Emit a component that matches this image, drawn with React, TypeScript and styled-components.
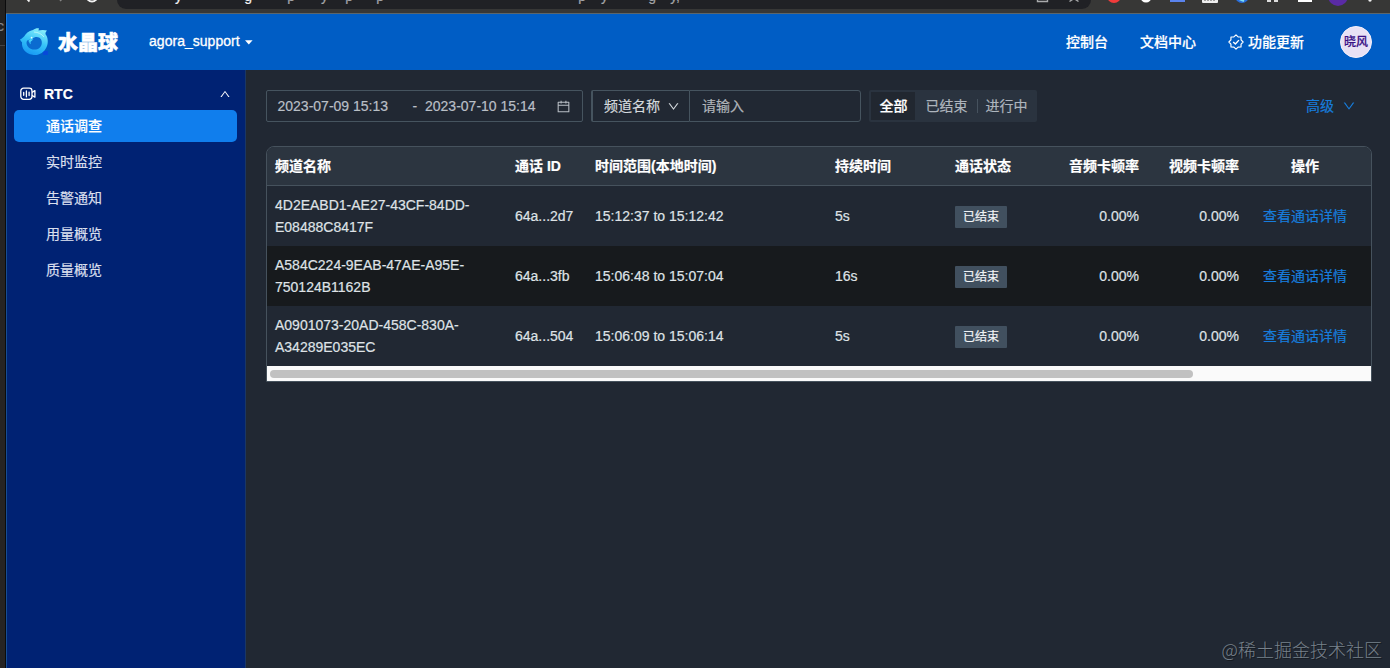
import React from "react";
import styled, { createGlobalStyle } from "styled-components";
import { AiOutlineCalendar, AiOutlineDown, AiOutlineUp } from "react-icons/ai";

const Global = createGlobalStyle`
  * { box-sizing: border-box; }
  body {
    margin: 0;
    width: 1390px;
    height: 668px;
    overflow: hidden;
    background: #262524;
    color: #e3e6ea;
    font: 14px/22px "Liberation Sans", "Noto Sans CJK SC", sans-serif;
    -webkit-text-stroke: 0.2px currentColor;
  }
`;

const Desktop = styled.div`
  display: flex;
  width: 1390px;
  height: 668px;
  overflow: hidden;
`;

const BackWindow = styled.div`
  width: 5px;
  flex: none;
  background: #262423;
  overflow: hidden;
`;

const BackTop = styled.div`
  height: 46px;
  padding-top: 15px;
  border-bottom: 1px solid #454443;
  background: #232221;
  color: #85878a;
  font-size: 14px;
  text-indent: -3px;
`;

const Window = styled.div`
  flex: 1;
  min-width: 0;
  display: flex;
  flex-direction: column;
  border-left: 1px solid #0b0b0c;
`;

const Chrome = styled.div`
  height: 14px;
  flex: none;
  display: flex;
  align-items: flex-start;
  overflow: hidden;
  background: #373736;
  border-bottom: 1px solid #5b666c;
`;

const NavIcons = styled.svg`
  width: 111px;
  height: 8px;
  flex: none;
`;

const AddressBar = styled.div`
  width: 974px;
  height: 9px;
  flex: none;
  display: flex;
  justify-content: space-between;
  overflow: hidden;
  border-radius: 0 0 13px 13px;
  background: #202125;
`;

const Url = styled.div`
  display: flex;
  padding-left: 25px;
  color: #b7b9bc;
  line-height: 16px;
  margin-top: -12px;
  height: 16px;
`;

const UrlPart = styled.span<{ $w: number; $bright?: boolean }>`
  width: ${(p) => p.$w}px;
  flex: none;
  text-align: right;
  white-space: nowrap;
  color: ${(p) => (p.$bright ? "#f1f1f2" : "#a3a5a8")};
`;

const BarIcons = styled.svg`
  width: 62px;
  height: 8px;
`;

const Extensions = styled.svg`
  flex: 1;
  height: 8px;
`;

const Header = styled.header`
  height: 56px;
  flex: none;
  display: flex;
  align-items: center;
  padding: 0 18px 0 13px;
  background: #005dc5;
  border-left: 1px solid #1c7be0;
  color: #fff;
`;

const Brand = styled.div`
  margin-left: 9px;
  width: 62px;
  font: 900 20px/28px "Noto Sans CJK SC", sans-serif;
  -webkit-text-stroke: 0.5px #fff;
`;

const Account = styled.div`
  display: flex;
  align-items: center;
  gap: 5px;
  margin-left: 29px;
  margin-right: auto;
  padding-bottom: 2px;
  letter-spacing: 0.03px;
  -webkit-text-stroke: 0.3px #fff;

  svg { margin-top: 3px; }
`;

const TopLink = styled.div`
  display: flex;
  align-items: center;
  gap: 4px;
  margin-left: 32px;
  font-weight: 500;
`;

const Avatar = styled.div`
  width: 32px;
  height: 32px;
  margin-left: 36px;
  border-radius: 50%;
  background: #e8e1f5;
  border: 1px solid #f5f1fb;
  color: #391085;
  text-align: center;
  font-size: 12px;
  line-height: 30px;
  font-weight: 500;
`;

const Body = styled.div`
  flex: 1;
  display: flex;
  min-height: 0;
`;

const Sidebar = styled.nav`
  width: 240px;
  flex: none;
  padding: 8px 8px 0 7px;
  background: #002273;
  border-left: 1px solid #174d94;
  border-right: 1px solid #1b3764;
`;

const Group = styled.div`
  height: 32px;
  display: flex;
  align-items: center;
  padding: 0 6px;
  color: #fff;
  font-weight: 700;

  svg:last-child { margin-left: auto; }
`;

const GroupName = styled.span`
  margin-left: 8px;
`;

const MenuItem = styled.div<{ $active?: boolean }>`
  height: 32px;
  margin-bottom: 4px;
  padding-left: 32px;
  border-radius: 5px;
  line-height: 32px;
  font-weight: ${(p) => (p.$active ? 500 : 400)};
  color: ${(p) => (p.$active ? "#fff" : "#d9dfed")};
  background: ${(p) => (p.$active ? "#107eed" : "transparent")};
`;

const Main = styled.main`
  flex: 1;
  min-width: 0;
  padding: 20px 18px 0 20px;
  background: #212833;
`;

const Toolbar = styled.div`
  display: flex;
  height: 32px;
  align-items: stretch;
`;

const DateRange = styled.div`
  display: flex;
  align-items: center;
  width: 317px;
  padding: 0 10.5px;
  border: 1px solid #46545f;
  border-radius: 2px;
  color: #b9bfc6;
`;

const DateValue = styled.span<{ $w: number }>`
  width: ${(p) => p.$w}px;
  white-space: nowrap;
`;

const Filter = styled.div`
  display: flex;
  width: 270px;
  margin-left: 8px;
`;

const Select = styled.div`
  width: 98px;
  display: flex;
  align-items: center;
  gap: 7px;
  padding-left: 11px;
  border: 1px solid #46545f;
  border-left-width: 2px;
  border-right: 0;
  border-radius: 2px 0 0 2px;
  color: #d5dade;
`;

const SearchInput = styled.div`
  flex: 1;
  padding-left: 12px;
  line-height: 30px;
  border: 1px solid #46545f;
  border-radius: 0 3px 3px 0;
  color: #b0b5ba;
`;

const Segments = styled.div`
  display: flex;
  width: 168px;
  margin-left: 8px;
  padding: 2px;
  border-radius: 2px;
  background: #2a333f;
`;

const Segment = styled.div<{ $on?: boolean; $line?: boolean }>`
  position: relative;
  width: ${(p) => (p.$on ? 44 : 60)}px;
  flex: none;
  padding-left: ${(p) => (p.$on ? 1 : 3)}px;
  text-align: center;
  line-height: 28px;
  background: ${(p) => (p.$on ? "#212730" : "transparent")};
  color: ${(p) => (p.$on ? "#fff" : "#aeb5bd")};
  font-weight: ${(p) => (p.$on ? 500 : 400)};

  &::after {
    content: "";
    position: absolute;
    right: -3px;
    top: 7px;
    width: 1px;
    height: 14px;
    background: ${(p) => (p.$line ? "#46525e" : "transparent")};
  }
`;

const Advanced = styled.div`
  display: flex;
  align-items: center;
  gap: 8px;
  margin-left: auto;
  margin-right: 16px;
  color: #177ddc;
`;

const TableFrame = styled.div`
  width: 1106px;
  height: 236px;
  margin-top: 24px;
  border: 1px solid #46525d;
  border-radius: 8px 8px 0 0;
  overflow: hidden;
`;

const Table = styled.div`
  display: grid;
  grid-template-columns: 240px 80px 240px 120px 100px 100px 100px 116px 8px;
`;

const Row = styled.div<{ $head?: boolean; $dark?: boolean }>`
  display: grid;
  grid-column: 1 / -1;
  grid-template-columns: subgrid;
  align-items: center;
  height: ${(p) => (p.$head ? 39 : 60)}px;
  background: ${(p) => (p.$head ? "#2c3540" : p.$dark ? "#171a1d" : "#212833")};
  border-bottom: ${(p) => (p.$head ? "1px solid #46525d" : "0")};
  color: ${(p) => (p.$head ? "#fff" : "#dfe2e6")};
  font-weight: ${(p) => (p.$head ? 700 : 400)};
`;

const Cell = styled.div<{ $align?: "right" | "center" }>`
  padding: 0 8px;
  text-align: ${(p) => p.$align || "left"};
  white-space: nowrap;
`;

const ChannelCell = styled(Cell)`
  white-space: normal;
  width: 222px;
`;

const Tag = styled.span`
  display: inline-block;
  height: 22px;
  padding: 0 8px;
  border-radius: 1px;
  background: #41505f;
  color: #f0f2f4;
  font-size: 12px;
  line-height: 22px;
  vertical-align: middle;
`;

const DetailLink = styled.a`
  color: #177ddc;
`;

const ScrollTrack = styled.div`
  height: 15px;
  padding: 4px 3px;
  background: #fafafa;
`;

const ScrollThumb = styled.div`
  width: 923px;
  height: 8px;
  border-radius: 4px;
  background: #c1c1c1;
`;

const Watermark = styled.div`
  position: absolute;
  right: 8px;
  bottom: 6px;
  color: #78818b;
  font: 300 18px/26px "Noto Sans CJK SC", sans-serif;
  text-shadow: 1px 1px 0 #151a21;
  -webkit-text-stroke: 0;
`;

const Logo = () => (
  <svg width="29" height="28" viewBox="0 0 29 28">
    <defs>
      <linearGradient id="ball" x1="0.7" y1="0" x2="0.3" y2="1">
        <stop offset="0" stopColor="#8af0fb" />
        <stop offset="0.5" stopColor="#35c3f8" />
        <stop offset="1" stopColor="#1596f4" />
      </linearGradient>
    </defs>
    <path d="M23 23h5v4h-5z" fill="#0749d8" />
    <path
      d="M0 11.500C2 10.500 4 9 5.500 6.500C8 3.500 11 2.500 13 2C15 .5 17 0 19 .4L18.400 2.600C21 1.800 24.500 1.800 27 2.600C25.800 3.800 25.300 5 25.500 6.200C28 9 28.600 15 26.600 19C24 25 18 28 12.500 26.800C5.500 25.500 1.400 20.500 2 14.200C1.300 13.500 .4 12.700 0 11.500Z"
      fill="url(#ball)"
    />
    <path d="M15.500 9C19.500 8.200 22.300 11.500 21.800 15.200C21.400 19.200 18 21.800 14.200 21.600C10 21.500 7 18.800 6.500 15.200C6.300 12.800 8 11.600 10 11.800C8.500 13 8.800 15.600 11 16.300C9.800 13 12.500 9.800 15.500 9Z" fill="#0b6bd0" />
    <path d="M8 13C9.500 11.500 11.500 12 13.500 11C12 13 10.500 14.500 8 13Z" fill="#48d0f8" />
    <circle cx="11.600" cy="9.700" r="0.900" fill="#e6fcff" />
    <path d="M14 4C18 4.200 22 6 24 9" fill="none" stroke="#b1f5fb" strokeWidth="1" />
  </svg>
);

const CameraIcon = () => (
  <svg width="16" height="14" viewBox="0 0 16 14" fill="none" stroke="#fff" strokeWidth="1.300">
    <rect x="0.800" y="1.200" width="11.200" height="11.200" rx="2.800" />
    <path d="M3.700 5.500v2.800M6.400 4v5.800M9.100 5.200v3.400" strokeLinecap="round" />
    <path d="M12 5.400L14.900 3.600V10.200L12 8.400" strokeLinejoin="round" />
  </svg>
);

const SealIcon = () => (
  <svg width="16" height="16" viewBox="0 0 16 16" fill="none" stroke="#fff" strokeWidth="1.200" strokeLinejoin="round">
    <path d="M8 .9L10.100 2.900L13 3L13.100 5.900L15.100 8L13.100 10.100L13 13L10.100 13.100L8 15.100L5.900 13.100L3 13L2.900 10.100L.9 8L2.900 5.900L3 3L5.900 2.900Z" />
    <path d="M5.200 7.900L7.400 10L10.900 6.100" strokeWidth="1.400" />
  </svg>
);

const menu = ["通话调查", "实时监控", "告警通知", "用量概览", "质量概览"];

const calls = [
  { channel: "4D2EABD1-AE27-43CF-84DD-E08488C8417F", id: "64a...2d7", time: "15:12:37 to 15:12:42", length: "5s" },
  { channel: "A584C224-9EAB-47AE-A95E-750124B1162B", id: "64a...3fb", time: "15:06:48 to 15:07:04", length: "16s" },
  { channel: "A0901073-20AD-458C-830A-A34289E035EC", id: "64a...504", time: "15:06:09 to 15:06:14", length: "5s" },
];

const urlParts: [string, number, boolean][] = [
  ["y", 40, true],
  ["g", 70, true],
  ["p", 43, false],
  ["y", 33, false],
  ["p", 25, false],
  ["p", 31, false],
  ["p", 202, false],
  ["y", 22, false],
  ["g", 48, false],
  ["y,", 24, false],
];

export default function App() {
  return (
    <>
      <Global />
      <Desktop>
        <BackWindow>
          <BackTop>c</BackTop>
        </BackWindow>
        <Window>
          <Chrome>
            <NavIcons viewBox="0 0 111 8" fill="none">
              <path d="M19 -3L23.500 1.500" stroke="#f2f2f2" strokeWidth="1.800" />
              <path d="M57 -2L54 1" stroke="#858585" strokeWidth="1.500" />
              <circle cx="86" cy="-4" r="5.500" stroke="#f2f2f2" strokeWidth="2" />
            </NavIcons>
            <AddressBar>
              <Url>
                {urlParts.map(([text, width, bright], i) => (
                  <UrlPart key={i} $w={width} $bright={bright}>{text}</UrlPart>
                ))}
              </Url>
              <BarIcons viewBox="0 0 62 8" fill="none" stroke="#a9aaac" strokeWidth="1.400">
                <path d="M8.500 -4V1.500H18.500V-4" />
                <path d="M40.500 1.500L45 -1.500L49.500 1.500" />
              </BarIcons>
            </AddressBar>
            <Extensions viewBox="0 0 299 8" preserveAspectRatio="xMinYMin">
              <circle cx="23" cy="-4" r="7" fill="#f13b3b" />
              <circle cx="55" cy="-3" r="5.500" fill="#fff" />
              <rect x="79" y="-8" width="15" height="10" fill="#5a83ee" />
              <rect x="111" y="-8" width="16" height="11" rx="1" fill="#eee" />
              <path d="M113 0h12" stroke="#555" strokeDasharray="2 1" />
              <circle cx="151" cy="-4" r="7" fill="#2a6ddb" />
              <path d="M148 -1L153 1" stroke="#7fe0f3" strokeWidth="2" />
              <path d="M176 -3h4v5h-4zM183 -3h4v5h-4z" fill="#ddd" />
              <rect x="207" y="-5" width="14" height="7" fill="#fff" />
              <circle cx="247" cy="-4" r="10" fill="#5a2ba5" />
              <circle cx="279" cy="0" r="1.700" fill="#eee" />
            </Extensions>
          </Chrome>
          <Header>
            <Logo />
            <Brand>水晶球</Brand>
            <Account>
              agora_support
              <svg width="8" height="5" viewBox="0 0 8 5"><path d="M0 .3H7.600L3.800 4.500Z" fill="#fff" /></svg>
            </Account>
            <TopLink>控制台</TopLink>
            <TopLink>文档中心</TopLink>
            <TopLink><SealIcon />功能更新</TopLink>
            <Avatar>晓风</Avatar>
          </Header>
          <Body>
            <Sidebar>
              <Group>
                <CameraIcon />
                <GroupName>RTC</GroupName>
                <AiOutlineUp size={12} />
              </Group>
              {menu.map((name, i) => (
                <MenuItem key={name} $active={i === 0}>{name}</MenuItem>
              ))}
            </Sidebar>
            <Main>
              <Toolbar>
                <DateRange>
                  <DateValue $w={135}>2023-07-09 15:13</DateValue>
                  <DateValue $w={12.5}>-</DateValue>
                  <DateValue $w={131}>2023-07-10 15:14</DateValue>
                  <AiOutlineCalendar size={15} />
                </DateRange>
                <Filter>
                  <Select>频道名称<AiOutlineDown size={13} /></Select>
                  <SearchInput>请输入</SearchInput>
                </Filter>
                <Segments>
                  <Segment $on>全部</Segment>
                  <Segment $line>已结束</Segment>
                  <Segment>进行中</Segment>
                </Segments>
                <Advanced>高级<AiOutlineDown size={14} /></Advanced>
              </Toolbar>
              <TableFrame>
                <Table>
                  <Row $head>
                    <Cell>频道名称</Cell>
                    <Cell>通话 ID</Cell>
                    <Cell>时间范围(本地时间)</Cell>
                    <Cell>持续时间</Cell>
                    <Cell>通话状态</Cell>
                    <Cell $align="right">音频卡顿率</Cell>
                    <Cell $align="right">视频卡顿率</Cell>
                    <Cell $align="center">操作</Cell>
                  </Row>
                  {calls.map((call, i) => (
                    <Row key={call.id} $dark={i % 2 === 1}>
                      <ChannelCell>{call.channel}</ChannelCell>
                      <Cell>{call.id}</Cell>
                      <Cell>{call.time}</Cell>
                      <Cell>{call.length}</Cell>
                      <Cell><Tag>已结束</Tag></Cell>
                      <Cell $align="right">0.00%</Cell>
                      <Cell $align="right">0.00%</Cell>
                      <Cell $align="center"><DetailLink>查看通话详情</DetailLink></Cell>
                    </Row>
                  ))}
                </Table>
                <ScrollTrack><ScrollThumb /></ScrollTrack>
              </TableFrame>
            </Main>
          </Body>
        </Window>
      </Desktop>
      <Watermark>@稀土掘金技术社区</Watermark>
    </>
  );
}
